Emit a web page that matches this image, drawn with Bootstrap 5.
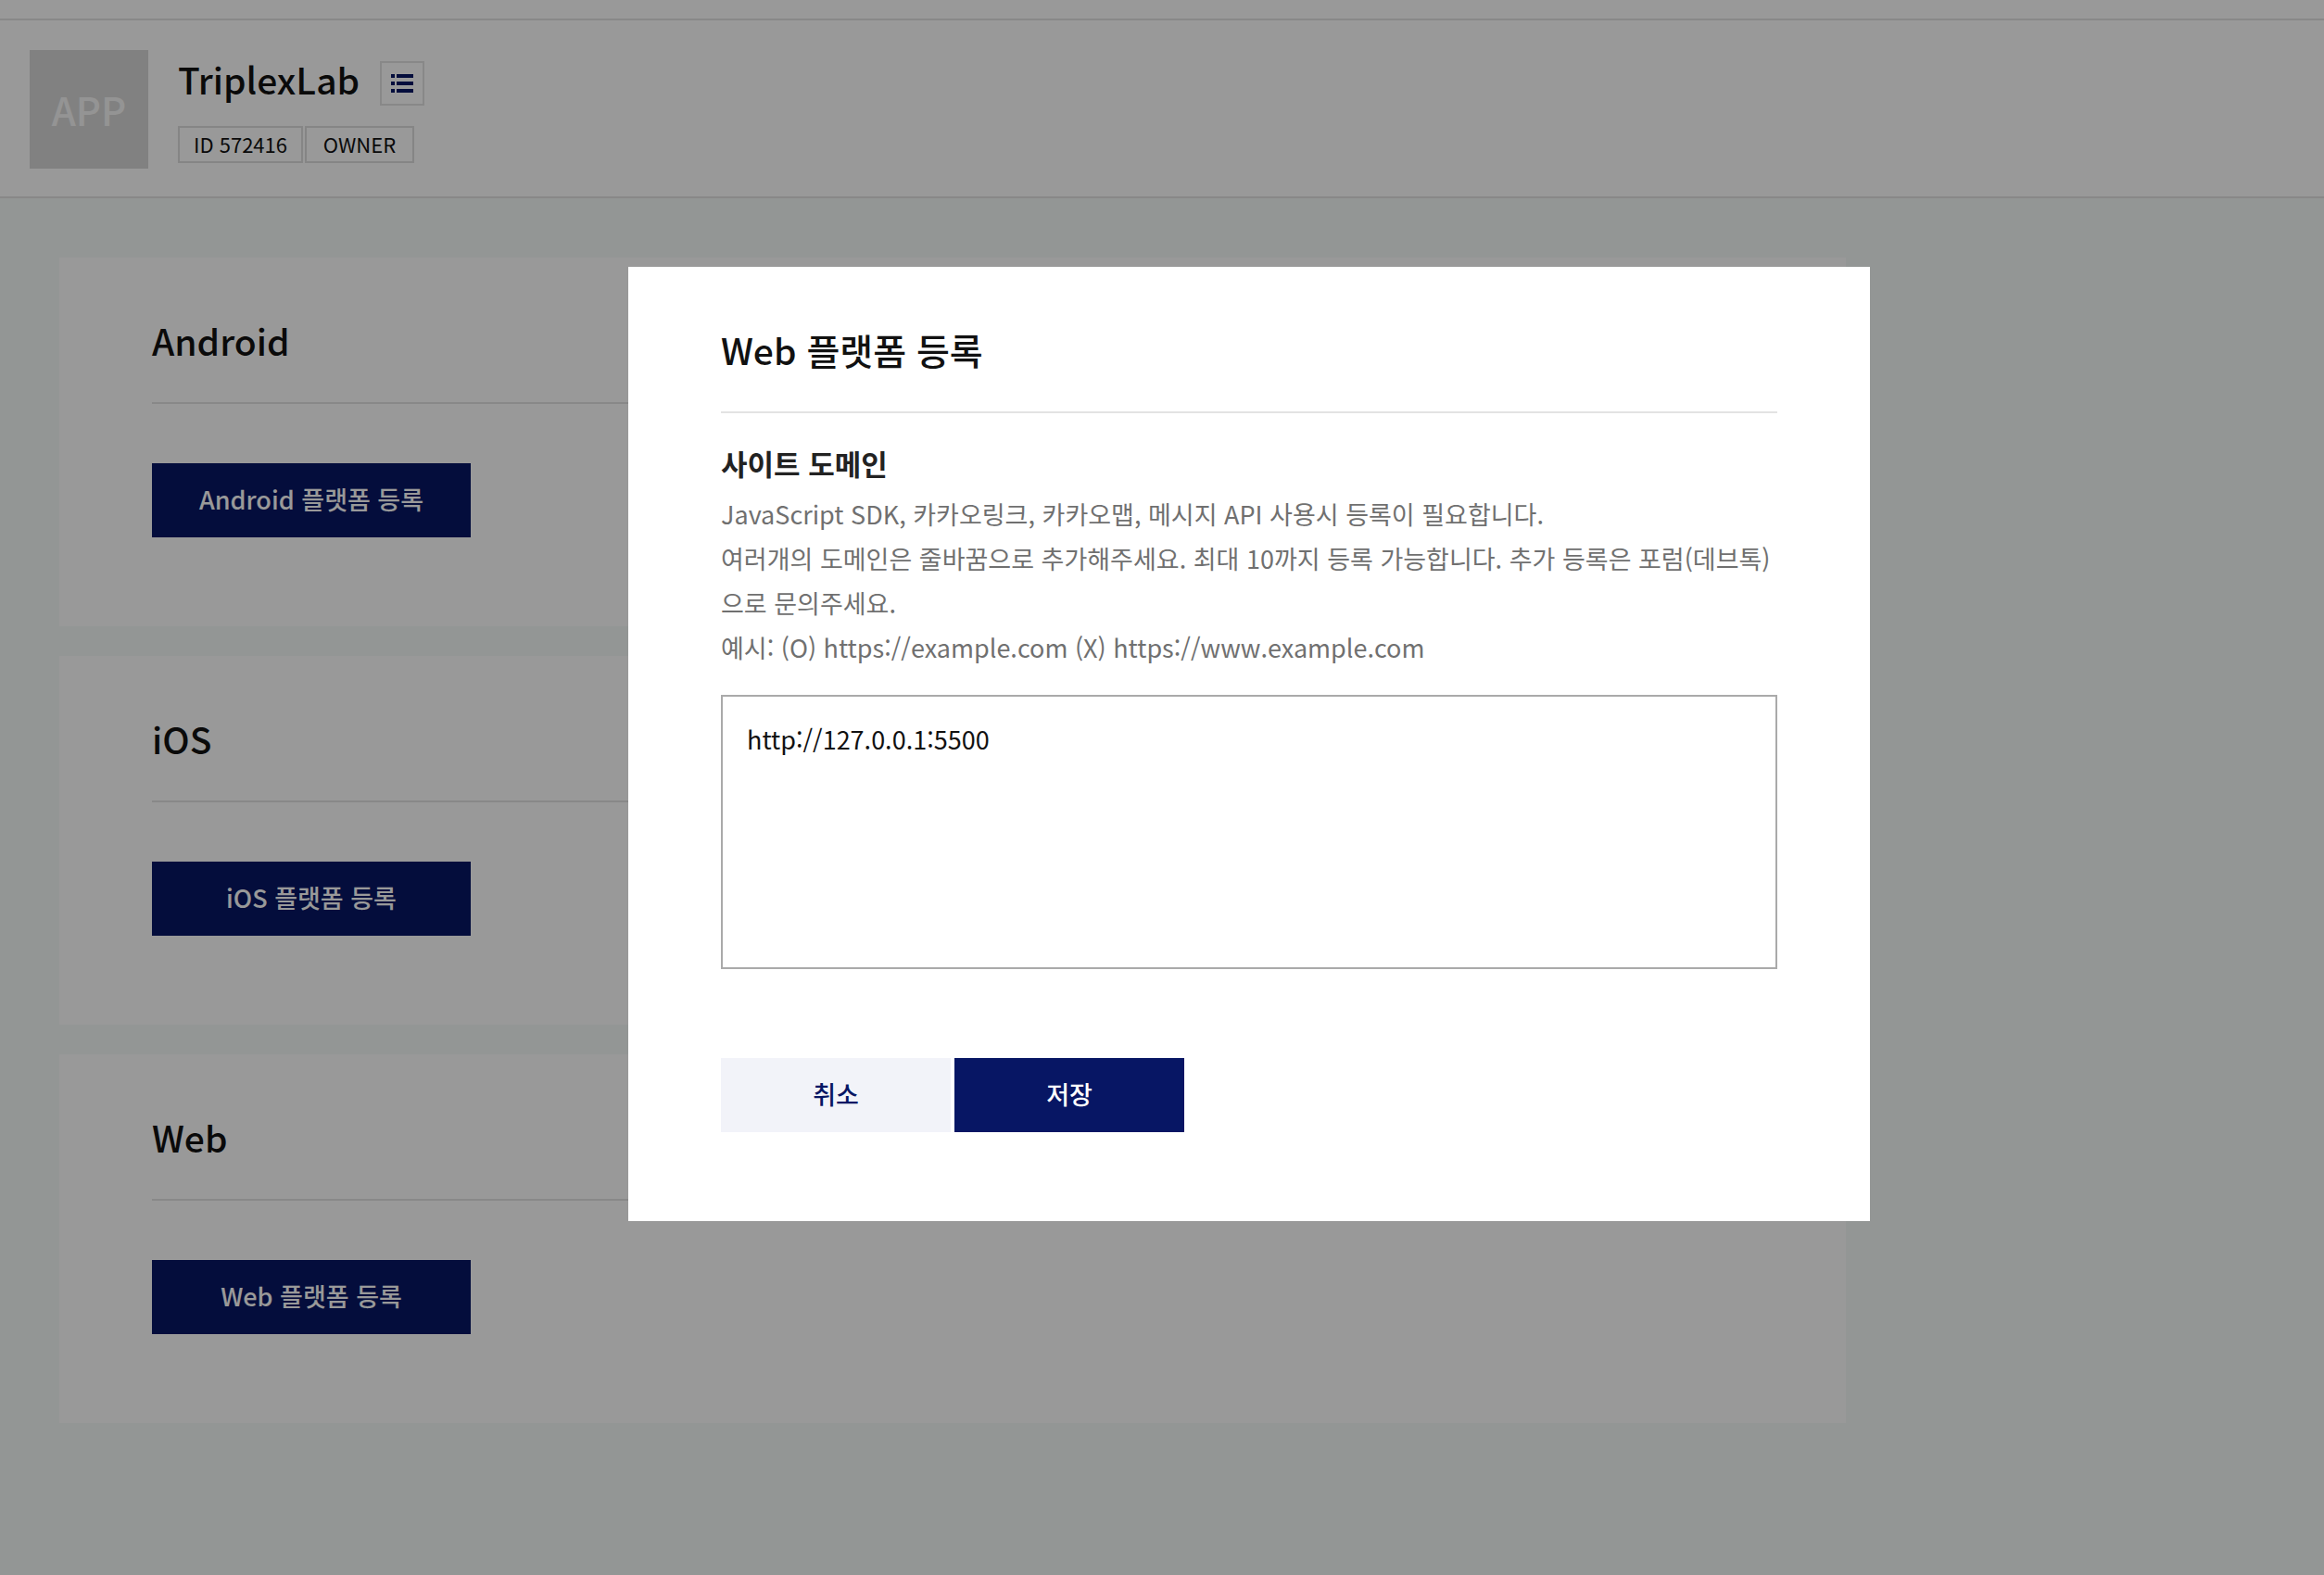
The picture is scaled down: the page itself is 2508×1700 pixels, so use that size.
<!DOCTYPE html>
<html lang="ko">
<head>
<meta charset="utf-8">
<meta name="viewport" content="width=device-width, initial-scale=1">
<title>플랫폼 - TriplexLab</title>
<link href="https://cdn.jsdelivr.net/npm/bootstrap@5.3.0/dist/css/bootstrap.min.css" rel="stylesheet">
<style>
:root { --navy: #071664; --line: #e3e3e3; }
body { font-family: "Noto Sans CJK KR", sans-serif; font-size: 27px; line-height: 48px; color: #111; background: #f5faf8; min-height: 100vh; }
.topbar { height: 20px; }
.apphead { border-top: 2px solid var(--line); border-bottom: 2px solid var(--line); gap: 32px; padding: 32px 32px 30px; }
.avatar { width: 128px; height: 128px; background: #d7d7d7; color: #f7f7f7; font-size: 42px; font-weight: 500; }
.appname { font-size: 39px; line-height: 62px; font-weight: 500; }
.appline { gap: 22px; }
.listbtn { width: 48px; height: 48px; border: 2px solid var(--line); color: var(--navy); margin-top: 12px; }
.tags { gap: 2px; margin-top: 20px; }
.tagbox { border: 2px solid #dedede; font-size: 22px; line-height: 34px; min-width: 118px; padding: 0 15px 2px; text-align: center; }
.platforms { padding: 64px; gap: 32px; max-width: 2056px; }
.panel { padding: 60px 100px 96px; }
.heading { font-size: 39px; line-height: 58px; font-weight: 500; padding-bottom: 38px; border-bottom: 2px solid var(--line); }
.action { height: 80px; border: 0; border-radius: 0; font-size: 27px; font-weight: 500; padding: 0 0 2px; }
.action-navy, .action-navy:hover { background: var(--navy); color: #fff; }
.action-pale, .action-pale:hover { background: #f2f3f9; color: var(--navy); }
.panel .action { width: 344px; margin-top: 64px; }
.veil { --bs-modal-width: 1340px; background: rgba(0, 0, 0, .4); padding: 288px 0 0 188px; }
.sheet { padding: 60px 100px 96px; }
.fieldname { font-size: 31px; font-weight: 700; color: #222; margin: 30px 0 7px; }
.hint { color: #707070; margin-bottom: 27px; }
.domains, .domains:focus { height: 296px; border: 2px solid #aaa; border-radius: 0; padding: 22px 26px; font-size: 27px; line-height: 48px; color: #111; resize: none; }
.sheet .action { width: 248px; margin-top: 96px; }
</style>
</head>
<body>
<div class="topbar bg-white"></div>
<header class="apphead bg-white d-flex align-items-start">
  <div class="avatar d-flex align-items-center justify-content-center">APP</div>
  <div>
    <div class="appline d-flex align-items-start">
      <h1 class="appname m-0">TriplexLab</h1>
      <button type="button" class="listbtn btn rounded-0 p-0 d-flex align-items-center justify-content-center" aria-label="앱 목록">
        <svg width="24" height="20" viewBox="0 0 24 20" fill="currentColor" aria-hidden="true"><path d="M0 0h4v4H0zM6 0h18v4H6zM0 8h4v4H0zM6 8h18v4H6zM0 16h4v4H0zM6 16h18v4H6z"/></svg>
      </button>
    </div>
    <div class="tags d-flex">
      <span class="tagbox">ID 572416</span>
      <span class="tagbox">OWNER</span>
    </div>
  </div>
</header>
<main class="platforms d-flex flex-column">
  <section class="panel bg-white">
    <h2 class="heading mb-0">Android</h2>
    <button type="button" class="btn action action-navy d-block">Android 플랫폼 등록</button>
  </section>
  <section class="panel bg-white">
    <h2 class="heading mb-0">iOS</h2>
    <button type="button" class="btn action action-navy d-block">iOS 플랫폼 등록</button>
  </section>
  <section class="panel bg-white">
    <h2 class="heading mb-0">Web</h2>
    <button type="button" class="btn action action-navy d-block">Web 플랫폼 등록</button>
  </section>
</main>
<div class="modal veil d-block" role="dialog" aria-modal="true" aria-labelledby="sheetTitle">
  <div class="modal-dialog my-0">
    <form class="modal-content sheet border-0 rounded-0">
      <h2 class="heading mb-0" id="sheetTitle">Web 플랫폼 등록</h2>
      <label class="fieldname" for="domains">사이트 도메인</label>
      <p class="hint" id="domainHint">JavaScript SDK, 카카오링크, 카카오맵, 메시지 API 사용시 등록이 필요합니다.<br>여러개의 도메인은 줄바꿈으로 추가해주세요. 최대 10까지 등록 가능합니다. 추가 등록은 포럼(데브톡)으로 문의주세요.<br>예시: (O) https://example.com (X) https://www.example.com</p>
      <textarea class="form-control domains" id="domains" aria-describedby="domainHint">http://127.0.0.1:5500</textarea>
      <div class="d-flex gap-1">
        <button type="button" class="btn action action-pale">취소</button>
        <button type="submit" class="btn action action-navy">저장</button>
      </div>
    </form>
  </div>
</div>
<script src="https://cdn.jsdelivr.net/npm/bootstrap@5.3.0/dist/js/bootstrap.bundle.min.js"></script>
</body>
</html>
